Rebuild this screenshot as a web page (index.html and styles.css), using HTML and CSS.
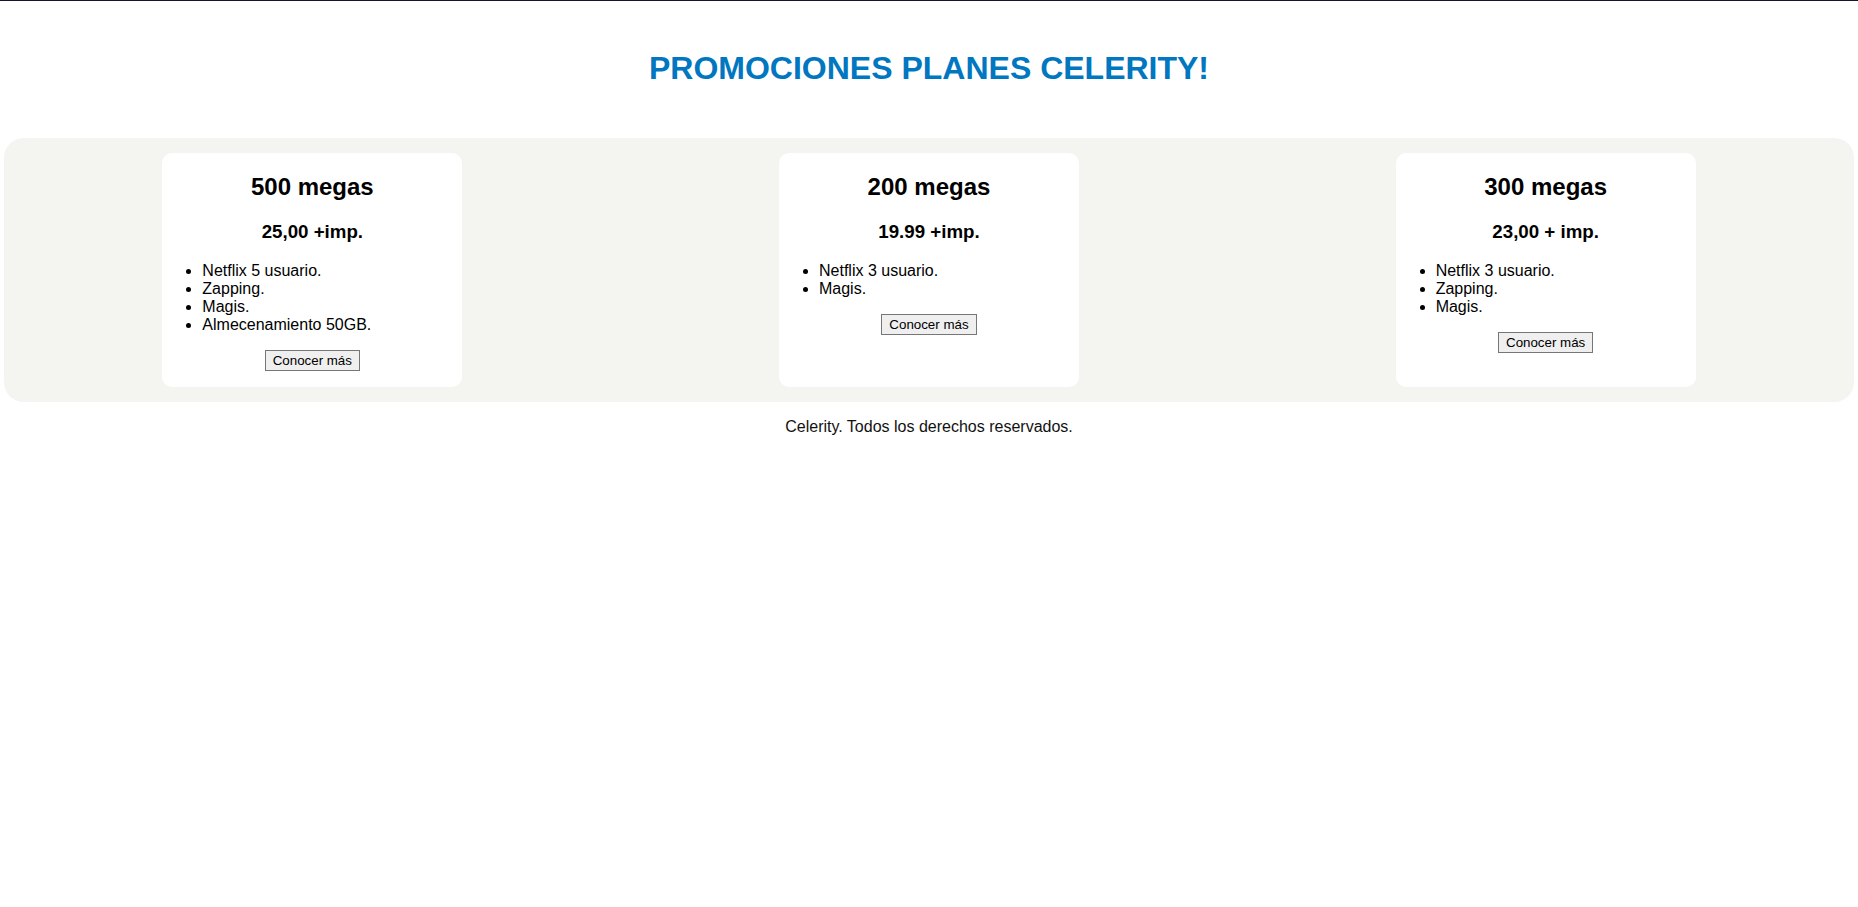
FILE: index.html
```html
<!DOCTYPE html>
<html lang="es">
<head>
<meta charset="utf-8">
<title>Promociones Celerity</title>
<link rel="stylesheet" href="styles.css">
</head>
<body>
<header class="header">
  <h1 class="title">PROMOCIONES PLANES CELERITY!</h1>
</header>
<main class="plans">
  <article class="plan">
    <h2 class="plan-name">500 megas</h2>
    <h3 class="plan-price">25,00 +imp.</h3>
    <ul class="plan-features">
      <li>Netflix 5 usuario.</li>
      <li>Zapping.</li>
      <li>Magis.</li>
      <li>Almecenamiento 50GB.</li>
    </ul>
    <p class="plan-action"><button class="btn" type="button">Conocer más</button></p>
  </article>
  <article class="plan">
    <h2 class="plan-name">200 megas</h2>
    <h3 class="plan-price">19.99 +imp.</h3>
    <ul class="plan-features">
      <li>Netflix 3 usuario.</li>
      <li>Magis.</li>
    </ul>
    <p class="plan-action"><button class="btn" type="button">Conocer más</button></p>
  </article>
  <article class="plan">
    <h2 class="plan-name">300 megas</h2>
    <h3 class="plan-price">23,00 + imp.</h3>
    <ul class="plan-features">
      <li>Netflix 3 usuario.</li>
      <li>Zapping.</li>
      <li>Magis.</li>
    </ul>
    <p class="plan-action"><button class="btn" type="button">Conocer más</button></p>
  </article>
</main>
<footer class="footer">
  <p class="footer-text">Celerity. Todos los derechos reservados.</p>
</footer>
</body>
</html>
```

FILE: styles.css
```css
html, body {
  margin: 0;
  padding: 0;
}

body {
  font-family: "Liberation Sans", Arial, sans-serif;
  font-size: 16px;
  color: #000;
  background: #fff;
  border-top: 1px solid #14142a;
}

.header {
  padding: 28px 0 29px;
  text-align: center;
}

.title {
  margin: 21.44px 0;
  font-size: 32px;
  font-weight: bold;
  color: #0077c0;
}

.plans {
  display: flex;
  justify-content: space-around;
  align-items: stretch;
  margin: 0 4px;
  padding: 15px 0;
  background: #f4f4f0;
  border-radius: 20px;
}

.plan {
  width: 300px;
  background: #fff;
  border-radius: 10px;
  display: flow-root;
}

.plan-name {
  margin: 19.92px 0;
  font-size: 24px;
  font-weight: bold;
  text-align: center;
}

.plan-price {
  margin: 18.72px 0 19.72px;
  font-size: 18.72px;
  font-weight: bold;
  text-align: center;
}

.plan-features {
  margin: 16px 0;
  padding-left: 40px;
}

.plan-action {
  margin: 16px 0;
  text-align: center;
}

.btn {
  font-family: "Liberation Sans", Arial, sans-serif;
  font-size: 13.333px;
  color: #000;
  background: #efefef;
  border: 1px solid #767676;
  border-radius: 0;
  padding: 2px 7px;
  margin: 0;
  line-height: normal;
}

.footer {
  text-align: center;
}

.footer-text {
  margin: 16px 0;
  color: #111;
}
```
